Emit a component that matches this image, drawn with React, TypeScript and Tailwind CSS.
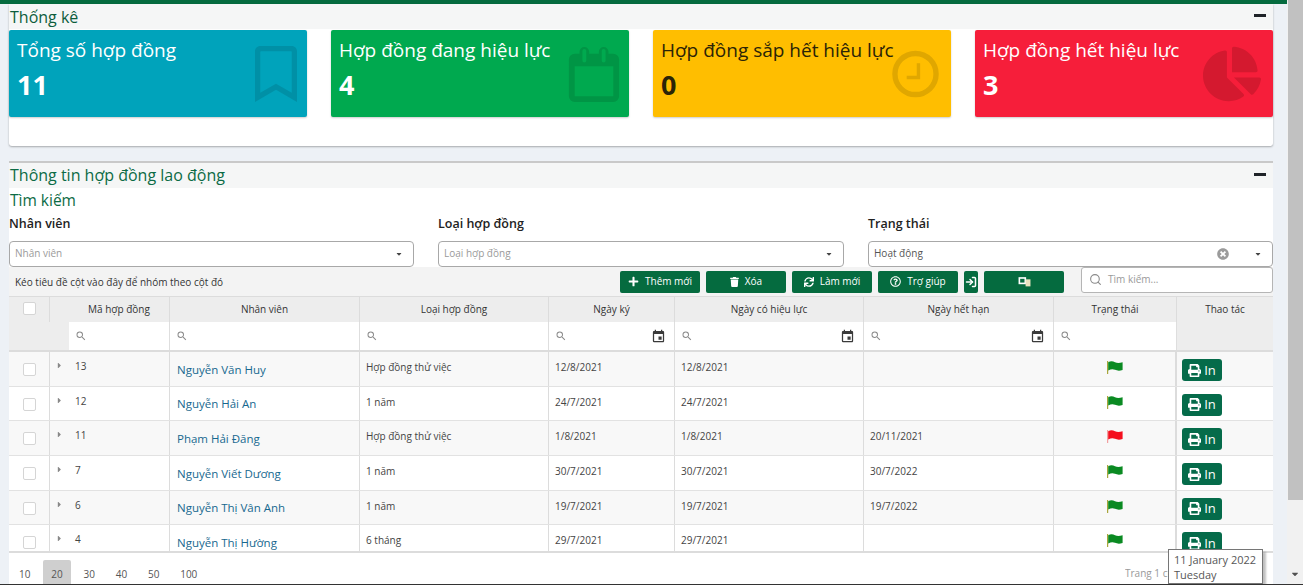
import { FaRegBookmark, FaChartPie, FaPrint, FaPlus, FaTrash, FaSync, FaRegQuestionCircle, FaCaretDown, FaCaretRight, FaTimesCircle } from "react-icons/fa";
import { MdEvent, MdSearch } from "react-icons/md";
import { FiSearch, FiLogIn } from "react-icons/fi";

const columns = "grid grid-cols-[41px_120px_190px_189px_126px_189px_190px_123px_96px]";

const stats = [
  { title: "Tổng số hợp đồng", value: "11", bg: "bg-[#00a3bb]", text: "text-white", icon: "bookmark" },
  { title: "Hợp đồng đang hiệu lực", value: "4", bg: "bg-[#00a94f]", text: "text-white", icon: "calendar" },
  { title: "Hợp đồng sắp hết hiệu lực", value: "0", bg: "bg-[#ffbe00]", text: "text-[#2b2407]", icon: "clock" },
  { title: "Hợp đồng hết hiệu lực", value: "3", bg: "bg-[#f61e3a]", text: "text-white", icon: "pie" },
];

const rows = [
  { id: "13", name: "Nguyễn Văn Huy", type: "Hợp đồng thử việc", signed: "12/8/2021", from: "12/8/2021", to: "", flag: "green" },
  { id: "12", name: "Nguyễn Hải An", type: "1 năm", signed: "24/7/2021", from: "24/7/2021", to: "", flag: "green" },
  { id: "11", name: "Phạm Hải Đăng", type: "Hợp đồng thử việc", signed: "1/8/2021", from: "1/8/2021", to: "20/11/2021", flag: "red" },
  { id: "7", name: "Nguyễn Viết Dương", type: "1 năm", signed: "30/7/2021", from: "30/7/2021", to: "30/7/2022", flag: "green" },
  { id: "6", name: "Nguyễn Thị Vân Anh", type: "1 năm", signed: "19/7/2021", from: "19/7/2021", to: "19/7/2022", flag: "green" },
  { id: "4", name: "Nguyễn Thị Hường", type: "6 tháng", signed: "29/7/2021", from: "29/7/2021", to: "", flag: "green" },
];

const headers = ["Nhân viên", "Loại hợp đồng", "Ngày ký", "Ngày có hiệu lực", "Ngày hết hạn", "Trạng thái", "Thao tác"];

const CalendarIcon = () => (
  <svg viewBox="0 0 52 58" className="w-[52px] h-[56px]" fill="currentColor">
    <path d="M6 8h5V6a5 5 0 0 1 10 0v2h10V6a5 5 0 0 1 10 0v2h5a6 6 0 0 1 6 6v38a6 6 0 0 1-6 6H6a6 6 0 0 1-6-6V14a6 6 0 0 1 6-6zm0 13v31h40V21zM14 5v10a2 2 0 0 0 4 0V5a2 2 0 0 0-4 0zm20 0v10a2 2 0 0 0 4 0V5a2 2 0 0 0-4 0z" fillRule="evenodd" />
  </svg>
);

const ClockIcon = () => (
  <svg viewBox="0 0 48 48" className="w-[47px] h-[48px]" fill="none" stroke="currentColor">
    <circle cx="24" cy="24" r="21" strokeWidth="5.5" />
    <path d="M27 13v14.5H15" strokeWidth="3.5" />
  </svg>
);

const FlagIcon = ({ red }: { red: boolean }) => (
  <svg viewBox="0 0 16 13" className="w-[16px] h-[13px]">
    <rect x="0" y="0" width="1.2" height="13" fill={red ? "#f2a0a0" : "#a9a63c"} />
    <path d="M1.2 1.2C4 -0.2 6 0.4 8 1.2s4 1 7.6 0V9C12 10.2 10 9.6 8 8.8S4 8 1.2 9.4z" fill={red ? "#f40f1e" : "#0a8a22"} />
  </svg>
);

const StatIcon = ({ name }: { name: string }) => {
  if (name === "bookmark") return <FaRegBookmark className="text-[#0090a6] w-[42px] h-[56px] mt-[16px] mr-[10px]" />;
  if (name === "calendar") return <div className="text-[#009545] mt-[16px] mr-[9px]"><CalendarIcon /></div>;
  if (name === "clock") return <div className="text-[#e0a700] mt-[20px] mr-[12px]"><ClockIcon /></div>;
  return <FaChartPie className="text-[#d4192f] w-[58px] h-[58px] mt-[15px] mr-[12px]" />;
};

const Minus = () => <div className="w-[12px] h-[2.5px] bg-[#1f2328] -mt-[2px]" />;

const ToolButton = ({ icon, label, className }: { icon: React.ReactNode; label?: string; className?: string }) => (
  <button className={`h-[22px] bg-[#056b3f] rounded-[2px] text-white text-[10px] flex items-center justify-center gap-[6px] ${className ?? "w-[80px]"}`}>
    {icon}
    {label && <span>{label}</span>}
  </button>
);

const SelectBox = ({ value, dark, clear }: { value: string; dark?: boolean; clear?: boolean }) => (
  <div className="h-[26px] border border-[#a8a8a8] rounded-[4px] bg-white flex items-center pl-[5px] pr-[10px]">
    <span className={`text-[10px] flex-1 -mt-[2px] ${dark ? "text-[#555]" : "text-[#9a9a9a]"}`}>{value}</span>
    {clear && <FaTimesCircle className="text-[#9b9b9b] w-[12px] h-[12px] mr-[25px]" />}
    <FaCaretDown className="text-[#444] w-[8px] h-[8px]" />
  </div>
);

const FilterCell = ({ date, first }: { date?: boolean; first?: boolean }) => (
  <div className={`bg-white border-r border-[#dedede] flex items-center justify-between pl-[6px] pr-[8px] ${first ? "ml-[19px]" : ""}`}>
    <MdSearch className="text-[#8a8a8a] w-[12px] h-[12px]" />
    {date && <MdEvent className="text-[#3a3a3a] w-[15px] h-[15px]" />}
  </div>
);

export default function App() {
  return (
    <div className="h-[585px] flex overflow-hidden bg-[#edf1f6] relative font-['Open_Sans','Noto_Sans',sans-serif] border-b border-[#333]">
      <div className="w-[1287px] shrink-0 flex flex-col">
        <div className="h-[4px] bg-[#056b3f] shrink-0" />
        <div className="flex-1 min-h-0 pl-[9px] pr-[14px] flex flex-col">
          {/* thong ke */}
          <section className="h-[142px] shrink-0 bg-white rounded-b-[3px] shadow-[0_1px_2px_rgba(0,0,0,0.3)]">
            <div className="h-[25px] bg-[#f5f6f6] flex items-center justify-between pr-[7px]">
              <span className="text-[16px] leading-[25px] mt-[1px] text-[#0c5d3c] pl-px">Thống kê</span>
              <Minus />
            </div>
            <div className="grid grid-cols-4 gap-x-[24px] pt-px">
              {stats.map((s) => (
                <div key={s.title} className={`${s.bg} ${s.text} h-[87px] rounded-[2px] shadow-[0_1px_2px_rgba(0,0,0,0.2)] flex justify-between overflow-hidden relative`}>
                  <div className="pl-[8px] pt-[7px]">
                    <div className="text-[19px] leading-[26px] whitespace-nowrap relative z-10">{s.title}</div>
                    <div className="text-[27px] leading-[36px] font-bold mt-[4px] relative z-10">{s.value}</div>
                  </div>
                  <div className="absolute right-0 top-0"><StatIcon name={s.icon} /></div>
                </div>
              ))}
            </div>
          </section>

          {/* thong tin */}
          <section className="mt-[15px] flex-1 min-h-0 bg-white border-t-2 border-[#c9c9c9] flex flex-col overflow-hidden">
            <div className="h-[25px] shrink-0 bg-[#f5f6f6] flex items-center justify-between pr-[7px]">
              <span className="text-[16px] leading-[25px] text-[#0c6b45] pl-px">Thông tin hợp đồng lao động</span>
              <Minus />
            </div>
            <div className="h-[25px] shrink-0 text-[15.5px] leading-[24px] text-[#0c6b45] pl-px">Tìm kiếm</div>
            <div className="grid grid-cols-[405px_406px_1fr] gap-x-[24px] shrink-0">
              {[
                { label: "Nhân viên", value: "Nhân viên" },
                { label: "Loại hợp đồng", value: "Loại hợp đồng" },
                { label: "Trạng thái", value: "Hoạt động", dark: true, clear: true },
              ].map((f) => (
                <div key={f.label}>
                  <div className="text-[12.5px] font-semibold text-[#222] h-[28px] leading-[22px]">{f.label}</div>
                  <SelectBox value={f.value} dark={f.dark} clear={f.clear} />
                </div>
              ))}
            </div>
            <div className="h-[29px] shrink-0 bg-[#f3f3f3] flex items-center pl-[6px] relative">
              <span className="text-[10px] text-[#333] flex-1 mt-[1px]">Kéo tiêu đề cột vào đây để nhóm theo cột đó</span>
              <div className="flex items-center gap-[6px] mr-[17px]">
                <ToolButton icon={<FaPlus className="w-[11px] h-[11px]" />} label="Thêm mới" />
                <ToolButton icon={<FaTrash className="w-[9px] h-[10px]" />} label="Xóa" />
                <ToolButton icon={<FaSync className="w-[10px] h-[10px]" />} label="Làm mới" />
                <ToolButton icon={<FaRegQuestionCircle className="w-[11px] h-[11px]" />} label="Trợ giúp" />
                <ToolButton icon={<FiLogIn className="w-[12px] h-[12px] shrink-0" strokeWidth={3} />} className="w-[14px]" />
                <ToolButton
                  icon={
                    <svg viewBox="0 0 12 10" className="w-[13px] h-[11px]" fill="none">
                      <rect x="0.5" y="1" width="7" height="6.5" fill="#fff" />
                      <rect x="2" y="2.5" width="4" height="3.5" fill="#056b3f" />
                      <rect x="7" y="3" width="4.5" height="6.5" fill="#e9e3c0" />
                    </svg>
                  }
                />
              </div>
              <div className="w-[192px] h-[26px] border border-[#b5b5b5] rounded-[3px] bg-white flex items-center pl-[7px] gap-[6px] -mt-[4px]">
                <FiSearch className="text-[#8a8a8a] w-[13px] h-[13px]" />
                <span className="text-[10px] text-[#9a9a9a]">Tìm kiếm...</span>
              </div>
            </div>

            {/* table */}
            <div className="flex-1 min-h-0 flex flex-col text-[#444]">
              <div className={`${columns} h-[26px] shrink-0 bg-[#ededed] border-t border-[#dcdcdc]`}>
                <div className="border-r border-[#dcdcdc] flex items-center justify-center">
                  <div className="w-[13px] h-[13px] bg-white border border-[#d5d5d5] rounded-[2px] -mt-[2px]" />
                </div>
                <div className="border-r border-[#dcdcdc] flex items-center justify-center text-[10px] text-[#333] pl-[19px]">Mã hợp đồng</div>
                {headers.map((h) => (
                  <div key={h} className="border-r border-[#dcdcdc] flex items-center justify-center text-[10px] text-[#333] last:border-r-0">
                    {h}
                  </div>
                ))}
              </div>
              <div className={`${columns} h-[30px] shrink-0 bg-[#ededed] border-b-2 border-[#dcdcdc]`}>
                <div />
                <FilterCell first />
                <FilterCell />
                <FilterCell />
                <FilterCell date />
                <FilterCell date />
                <FilterCell date />
                <FilterCell />
                <div />
              </div>
              <div className="flex-1 min-h-0 overflow-hidden">
                {rows.map((r, i) => (
                  <div key={r.id} className={`${columns} h-[34.7px] border-b border-[#e2e2e2] ${i % 2 === 0 ? "bg-[#f8f8f8]" : "bg-white"}`}>
                    <div className="border-r border-[#dcdcdc] flex items-center justify-center">
                      <div className="w-[13px] h-[13px] bg-white border border-[#d5d5d5] rounded-[2px] mt-[1px]" />
                    </div>
                    <div className="border-r border-[#dcdcdc] flex items-start pt-[8px] pl-[5px] text-[10px] leading-[12px]">
                      <FaCaretRight className="text-[#888] w-[9px] h-[9px] mt-px" />
                      <span className="ml-[11px]">{r.id}</span>
                    </div>
                    <div className="border-r border-[#dcdcdc] pl-[7px] pt-[8.5px] text-[11.5px] leading-[18px] text-[#17688f] whitespace-nowrap">{r.name}</div>
                    <div className="border-r border-[#dcdcdc] pl-[6px] pt-[9px] text-[10px] leading-[12px]">{r.type}</div>
                    <div className="border-r border-[#dcdcdc] pl-[6px] pt-[9px] text-[10px] leading-[12px]">{r.signed}</div>
                    <div className="border-r border-[#dcdcdc] pl-[6px] pt-[9px] text-[10px] leading-[12px]">{r.from}</div>
                    <div className="border-r border-[#dcdcdc] pl-[6px] pt-[9px] text-[10px] leading-[12px]">{r.to}</div>
                    <div className="border-r-2 border-[#dcdcdc] flex justify-center pt-[9px]">
                      <div className="h-[13px]"><FlagIcon red={r.flag === "red"} /></div>
                    </div>
                    <div className="pl-[5px] pt-[7px]">
                      <div className="w-[40px] h-[22px] bg-[#056b4a] rounded-[3px] text-white flex items-center justify-center gap-[3px]">
                        <FaPrint className="w-[13px] h-[13px]" />
                        <span className="text-[13px] leading-none">In</span>
                      </div>
                    </div>
                  </div>
                ))}
              </div>
              <div className="h-[33px] shrink-0 border-t-2 border-[#dcdcdc] bg-white flex items-center text-[10px] text-[#555] pl-[2px]">
                {["10", "20", "30", "40", "50", "100"].map((n) => (
                  <span key={n} className={`px-[8px] h-[25px] mt-[7px] flex items-center pt-[4px] rounded-t-[2px] mr-[4.8px] ${n === "20" ? "bg-[#cfcfcf]" : ""}`}>
                    {n}
                  </span>
                ))}
                <span className="ml-auto mr-[28px] mt-[10px] text-[#999] whitespace-nowrap w-[120px] overflow-hidden">Trang 1 của 1</span>
              </div>
            </div>
          </section>
        </div>
      </div>

      {/* scrollbar */}
      <div className="w-[16px] shrink-0 bg-[#f1f1f1] flex flex-col items-end justify-between">
        <div className="w-[15px] h-[500px] bg-[#c1c1c1]" />
        <FaCaretDown className="text-[#505050] w-[10px] h-[10px] mb-[5px] mr-[3px]" />
      </div>

      {/* tooltip */}
      <div className="absolute left-[1168px] top-[549px] w-[95px] h-[35px] bg-white border border-[#767676] shadow-[3px_3px_2px_rgba(0,0,0,0.25)] text-[11px] leading-[15px] text-[#575757] pl-[5px] pt-[2px]">
        <div>11 January 2022</div>
        <div>Tuesday</div>
      </div>
    </div>
  );
}
